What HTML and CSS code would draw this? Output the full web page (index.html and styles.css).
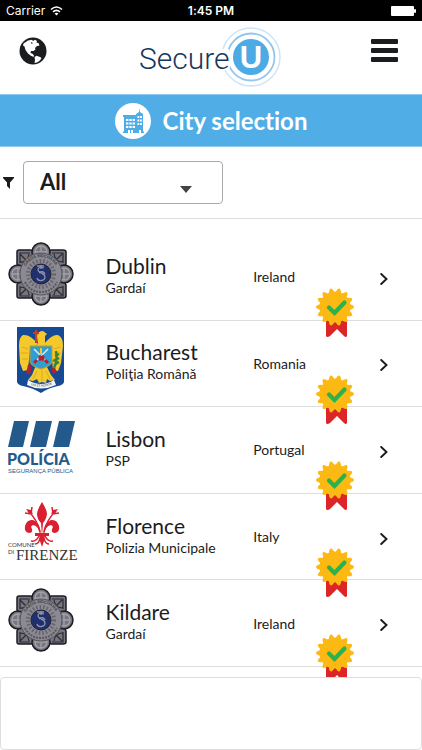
FILE: index.html
```
<!DOCTYPE html>
<html lang="en">
<head>
    <meta charset="UTF-8">
    <meta name="viewport" content="width=device-width, initial-scale=1.0">
    <title>SecureU - City selection</title>
    <link rel="stylesheet" href="styles.css">
</head>

<body>
    <!-- shared drawings -->
    <svg class="defs" width="0" height="0" aria-hidden="true">
        <symbol id="medal" viewBox="0 0 38 50">
            <path d="M10 30h21v18q-1 2-3 0l-7-7-7 7q-3 2-4 0z" fill="#dc2527"/>
            <g fill="#fdb913">
                <circle cx="19" cy="19" r="15.500"/>
                <ellipse cx="19" cy="19" rx="4.500" ry="19" transform="rotate(13 19 19)"/>
                <ellipse cx="19" cy="19" rx="4.500" ry="19" transform="rotate(39 19 19)"/>
                <ellipse cx="19" cy="19" rx="4.500" ry="19" transform="rotate(64 19 19)"/>
                <ellipse cx="19" cy="19" rx="4.500" ry="19" transform="rotate(90 19 19)"/>
                <ellipse cx="19" cy="19" rx="4.500" ry="19" transform="rotate(116 19 19)"/>
                <ellipse cx="19" cy="19" rx="4.500" ry="19" transform="rotate(141 19 19)"/>
                <ellipse cx="19" cy="19" rx="4.500" ry="19" transform="rotate(167 19 19)"/>
            </g>
            <path d="M13 19.500l5.500 5.500 10-10.500" fill="none" stroke="#2bb24c" stroke-width="4.200" stroke-linecap="round"/>
        </symbol>
        <symbol id="arrow" viewBox="0 0 8 12">
            <path d="M1.200 1l5.300 5-5.300 5" fill="none" stroke="#1b1c1d" stroke-width="1.900" stroke-linecap="round"/>
        </symbol>
    </svg>

    <!-- status bar -->
    <div class="status">
        <div class="carrier">
            <span>Carrier</span>
            <svg width="13" height="10" viewBox="0 0 13 10" fill="none" stroke="#fff" stroke-width="1.600">
                <path d="M1 3.500q5.500-5 11 0M3 5.800q3.500-3 7 0"/>
                <path d="M4.600 7.500q1.900-1.500 3.800 0l-1.900 2z" fill="#fff" stroke="none"/>
            </svg>
        </div>
        <div class="time">1:45 PM</div>
        <svg class="battery" width="25" height="10" viewBox="0 0 25 10" fill="#fff">
            <rect width="23" height="10" rx="1"/>
            <rect x="23" y="3" width="2" height="4" rx="1"/>
        </svg>
    </div>

    <!-- header -->
    <header class="header">
        <button class="icon-btn" aria-label="Language">
            <svg width="28" height="28" viewBox="0 0 28 28">
                <circle cx="14" cy="14" r="13.500" fill="#1b1c1d"/>
                <path d="M4.500 6.500L9 3.500l4-.8 1 1.300 2-1.200 2 1.200-.5 1.800 2 .2 1 2.500-2.500.5-2 2 .5 1.500-2 1.500-2.500 0-.5 2 2 .8 1.500 1.700-.5 1.500-3-1.500-2.500-2-2.500-3.500-1-3.500L4 8.500z" fill="#fff"/>
                <path d="M15.500 20l2-1.200 3.500 1.200 1.500 1-1.500 2.500-3 2-2.500.5.500-3z" fill="#fff"/>
                <path d="M12 5l2 1-1.500 1z" fill="#1b1c1d"/>
            </svg>
        </button>
        <a class="logo" href="#" aria-label="SecureU">
            <svg width="144" height="62" viewBox="-2 0 144 62">
                <circle cx="112" cy="30" r="29" fill="none" stroke="#cfe4f7" stroke-width="1.500"/>
                <circle cx="112" cy="30" r="23.500" fill="none" stroke="#94c6ee" stroke-width="1.800"/>
                <path d="M79 22h11l3 12-3 9H79z" fill="#fff"/>
                <circle cx="112" cy="30" r="18" fill="#4cabe4"/>
                <text class="logo-text" x="0" y="42">Secure</text>
                <text class="logo-u" x="112" y="41" text-anchor="middle">U</text>
            </svg>
        </a>
        <button class="icon-btn" aria-label="Menu">
            <svg width="28" height="24" viewBox="0 0 28 24" fill="#1b1c1d">
                <rect width="27" height="5" rx="1"/>
                <rect y="9" width="27" height="5" rx="1"/>
                <rect y="18" width="27" height="5" rx="1"/>
            </svg>
        </button>
    </header>

    <!-- title -->
    <div class="banner">
        <svg width="36" height="36" viewBox="0 0 36 36">
            <circle cx="18" cy="18" r="18" fill="#fff"/>
            <path d="M8 12h13v-1l3-2 .5-4 .5 4 3 2v17.500h1v1.500H8v-1.500h1V14H8z" fill="#4fade5"/>
            <g stroke="#fff" stroke-width="2.200">
                <path d="M11 17h9M11 20.500h9M11 24h9" stroke-dasharray="2.400 .9"/>
                <path d="M22.500 14h4.500M22.500 17.500h4.500M22.500 21h4.500" stroke-dasharray="1.800 .8"/>
            </g>
            <path d="M13 27h2v3h-2zM16 27h2v3h-2zM24 27h2v3h-2z" fill="#fff"/>
        </svg>
        <h1>City selection</h1>
    </div>

    <!-- filter -->
    <div class="filter">
        <label for="country">
            <svg width="11" height="12" viewBox="0 0 11 12" role="img" aria-label="Filter"><path d="M0 0h11v1L7 5.500V12L4 9V5.500L0 1z" fill="#1b1c1d"/></svg>
        </label>
        <div class="select">
            <select id="country">
                <option>All</option>
                <option>Ireland</option>
                <option>Romania</option>
                <option>Portugal</option>
                <option>Italy</option>
            </select>
            <svg class="caret" width="12" height="7" viewBox="0 0 12 7"><path d="M0 0h12L6 7z" fill="#444"/></svg>
        </div>
    </div>

    <!-- cities -->
    <ul class="cities">
        <li class="city">
            <svg class="crest" width="66" height="64" viewBox="0 0 66 64">
                <g id="garda">
                    <g fill="#77757f" stroke="#1c1c22" stroke-width="1.500">
                        <path d="M9 10q0-2 2-2h12l10 7 10-7h12q3 0 3 2v12l-6 10 6 11v11q0 2-3 2H43l-10-6-10 6H11q-2 0-2-2V43l6-11-6-10z"/>
                        <circle cx="33" cy="10" r="9"/>
                        <circle cx="33" cy="54" r="9"/>
                        <circle cx="10" cy="32" r="9"/>
                        <circle cx="56" cy="32" r="9"/>
                    </g>
                    <g fill="none" stroke="#2b2b31" stroke-width="1.200">
                        <path d="M12 21V11h10M12 20q8 1 9-8M12 12l8 8M44 11h11v10M46 12q1 8 9 8M54 12l-8 8M12 44v10h10M12 45q8 0 9 8M12 53l8-8M44 54h11V44M46 53q1-8 9-8M54 53l-8-8"/>
                    </g>
                    <g fill="none" stroke="#a5a2a9" stroke-width="1.300">
                        <circle cx="33" cy="10" r="6"/><path d="M33 4v12M27 10h12"/>
                        <circle cx="33" cy="54" r="6"/><path d="M33 48v12M27 54h12"/>
                        <circle cx="10" cy="32" r="6"/><path d="M10 26v12M4 32h12"/>
                        <circle cx="56" cy="32" r="6"/><path d="M56 26v12M50 32h12"/>
                    </g>
                    <circle cx="33" cy="32" r="21" fill="#8b8992" stroke="#55545c"/>
                    <path id="ring" d="M16 32a17 17 0 0 1 34 0" fill="none"/>
                    <text class="garda-text"><textPath href="#ring" startOffset="8">GARDA SÍOCHÁNA</textPath></text>
                    <path d="M17 40q5 10 16 10t16-10" fill="none" stroke="#5b5962" stroke-width="2.200" stroke-dasharray="2 1"/>
                    <circle cx="33" cy="32" r="13" fill="none" stroke="#66646d" stroke-width="4" stroke-dasharray="1.500 2"/>
                    <circle cx="33" cy="32" r="10" fill="#20306f" stroke="#22232d"/>
                    <path d="M36 26q-6-2-6 2c0 3 7 3 7 7s-7 5-8 1M29 24h7M33 23v4M31 31q4-3 6 1" fill="none" stroke="#8f93a6" stroke-width="1.300"/>
                </g>
            </svg>
            <div class="name">
                <h2>Dublin</h2>
                <p>Gardaí</p>
            </div>
            <span class="country">Ireland</span>
            <svg class="arrow" width="8" height="12"><use href="#arrow"/></svg>
            <svg class="medal" width="38" height="50"><use href="#medal"/></svg>
        </li>
        <li class="city">
            <svg class="crest" width="66" height="66" viewBox="0 0 66 66">
                <path d="M9 0h47v55q-1 3-6 4-10 2-17 7-8-5-18-7-5-1-6-4z" fill="#174a95"/>
                <g fill="#f4c92c">
                    <path d="M30 17q-8-10-15-9-4 2-4 11l1 17 3 8 5-1 2-21zM36 17q8-10 14-9 5 2 5 11l-2 17-3 8-5-1-2-21z"/>
                    <path d="M30 17l-1-8q1-5 6-5l4 3-2 2v9l5 3H24z"/>
                    <path d="M28 38h10l5 10 4 5-5 1-3-2-1 4-4-1-3 1-2-4-4 2-5-1 4-5z"/>
                </g>
                <path d="M14 20l6 2M13 26h7M14 32h6M52 20l-6 2M53 26h-7M52 32h-6M29 44l-4 8M34 43v11M38 44l4 8" stroke="#dba91c"/>
                <path d="M22 19h22v16q-1 4-11 7-10-3-11-7z" fill="#2e9fd3" stroke="#c59c2f"/>
                <path d="M26 22l14 14M40 22L26 36" stroke="#e3e6e8" stroke-width="1.500"/>
                <path d="M26 36l3-3M40 36l-3-3M31 29l5 4M31 33l5-4" stroke="#b32130" stroke-width="3"/>
                <path d="M33 21v6" stroke="#f4c92c" stroke-width="2"/>
                <path d="M28 3v13M25 6h6" stroke="#c44028" stroke-width="2"/>
                <path d="M22 38l-2 9M45 41l2 5" stroke="#b32130" stroke-width="4"/>
                <path d="M46 41q4-8 2-17M45 34l6-3M46 38l5-3M47 29l4-2" stroke="#39843d" stroke-width="2.500" fill="none"/>
                <path d="M20 53q13 8 26 0l2 5q-15 7-29 0z" fill="#f3f3f3"/>
                <path id="motto" d="M23 58q10 4 22-1" fill="none"/>
                <text class="motto-text"><textPath href="#motto">LEX ET HONOR</textPath></text>
            </svg>
            <div class="name">
                <h2>Bucharest</h2>
                <p>Poliţia Română</p>
            </div>
            <span class="country">Romania</span>
            <svg class="arrow" width="8" height="12"><use href="#arrow"/></svg>
            <svg class="medal" width="38" height="50"><use href="#medal"/></svg>
        </li>
        <li class="city">
            <svg class="crest" width="68" height="54" viewBox="0 0 68 54" fill="#24598b">
                <path d="M6 1h15l-6 26H0zM28 1h16l-6 26H22zM51 1h16l-6 26H45z"/>
                <text class="policia" x="-1" y="45">POLÍCIA</text>
                <text class="publica" x="0" y="53">SEGURANÇA PÚBLICA</text>
            </svg>
            <div class="name">
                <h2>Lisbon</h2>
                <p>PSP</p>
            </div>
            <span class="country">Portugal</span>
            <svg class="arrow" width="8" height="12"><use href="#arrow"/></svg>
            <svg class="medal" width="38" height="50"><use href="#medal"/></svg>
        </li>
        <li class="city">
            <svg class="crest" width="72" height="64" viewBox="0 0 72 64">
                <g fill="#dc1f30">
                    <path d="M34 0q5 8 5 12-1 6-4 9l-1 13-1-13q-4-4-4-9 0-4 5-12z"/>
                    <path d="M32 33q-1-9-7-10-3 1-1 4 1 4-3 4-5-1-4-7 2-7 8-6 7 2 8 15zM36 33q1-9 7-10 3 1 1 4-1 4 3 4 5-1 4-7-2-7-8-6-7 2-8 15z"/>
                    <path d="M27 31h14v3H27z"/>
                    <path d="M31 33h6l-1 6-2 6-2-6z"/>
                    <path d="M18 7l5 1 2 4-4-1zM50 7l-5 1-2 4 4-1z"/>
                </g>
                <g fill="none" stroke="#dc1f30" stroke-width="1.500">
                    <path d="M32 30Q29 17 20 9M36 30q3-13 12-21M31 34q-3 6-8 5M37 34q3 6 8 5M32 36q-1 6-5 6M36 36q1 6 5 6M24 5l-1 7-6-1M44 5l1 7 6-1"/>
                </g>
                <text class="comune" x="0" y="45">COMUNE</text>
                <text class="comune" x="0" y="52">DI</text>
                <text class="firenze" x="8" y="58">FIRENZE</text>
            </svg>
            <div class="name">
                <h2>Florence</h2>
                <p>Polizia Municipale</p>
            </div>
            <span class="country">Italy</span>
            <svg class="arrow" width="8" height="12"><use href="#arrow"/></svg>
            <svg class="medal" width="38" height="50"><use href="#medal"/></svg>
        </li>
        <li class="city">
            <svg class="crest" width="66" height="64" viewBox="0 0 66 64"><use href="#garda"/></svg>
            <div class="name">
                <h2>Kildare</h2>
                <p>Gardaí</p>
            </div>
            <span class="country">Ireland</span>
            <svg class="arrow" width="8" height="12"><use href="#arrow"/></svg>
            <svg class="medal" width="38" height="50"><use href="#medal"/></svg>
        </li>
    </ul>

    <!-- bottom panel -->
    <div class="panel"></div>
</body>
</html>
```
FILE: styles.css
```
* {
    box-sizing: border-box;
}

body {
    display: flex;
    flex-direction: column;
    min-height: 100vh;
    margin: 0;
    background-color: #fff;
    color: #1b1c1d;
    font-family: Lato, "Liberation Sans", sans-serif;
    font-variant-ligatures: none;
}

svg {
    display: block;
}

.defs {
    position: absolute;
}

.status {
    display: grid;
    grid-template-columns: 1fr auto 1fr;
    align-items: center;
    height: 21px;
    padding: 0 6px;
    background-color: #000;
    color: #fff;
    font-family: Inter, sans-serif;
    font-size: 12px;
}

.carrier {
    display: flex;
    align-items: center;
    gap: 5px;
}

.time {
    font-weight: 600;
}

.battery {
    justify-self: end;
}

.header {
    display: flex;
    align-items: center;
    justify-content: space-between;
    height: 73px;
    padding: 0 23px 0 19px;
}

.icon-btn {
    padding: 0 0 14px;
    border: 0;
    background: none;
}

.logo-text {
    font-family: Roboto, "Liberation Sans", sans-serif;
    font-size: 30px;
    font-weight: 300;
    fill: #17375a;
}

.logo-u {
    font-family: "Liberation Sans", sans-serif;
    font-size: 31px;
    font-weight: bold;
    fill: #fff;
}

.banner {
    display: flex;
    align-items: center;
    justify-content: center;
    gap: 12px;
    height: 53px;
    background-color: #50ade5;
    border-top: 1px solid #8fcaee;
    border-bottom: 1px solid #8fcaee;
    color: #fff;
}

.banner h1 {
    margin: 0;
    font-size: 24px;
    line-height: 28px;
}

.filter {
    display: flex;
    align-items: center;
    gap: 9px;
    height: 72px;
    padding-left: 3px;
    border-bottom: 1px solid #ddd;
}

.select {
    position: relative;
    width: 200px;
}

.select select {
    width: 100%;
    height: 43px;
    padding: 0 16px 2px;
    border: 1px solid #aaa;
    border-radius: 4px;
    background-color: #fff;
    color: #1b1c1d;
    font-family: inherit;
    font-size: 22px;
    font-weight: bold;
    appearance: none;
}

.caret {
    position: absolute;
    right: 31px;
    bottom: 11px;
    pointer-events: none;
}

.cities {
    display: flex;
    flex: 1;
    flex-direction: column;
    margin: 0;
    padding: 15px 0 0;
    list-style: none;
}

.city {
    position: relative;
    display: grid;
    flex: 1;
    grid-template-columns: 25% 35% 30% 10%;
    align-items: center;
    min-height: 86px;
    border-bottom: 1px solid #ddd;
}

.crest {
    margin: 0 0 6px 8px;
}

.name {
    padding-bottom: 4px;
}

.name h2 {
    margin: 0;
    font-size: 21px;
    font-weight: 400;
    line-height: 26px;
}

.name p {
    margin: 0;
    font-size: 14px;
    line-height: 18px;
}

.country {
    font-size: 14px;
}

.arrow {
    margin-top: 4px;
}

.medal {
    position: absolute;
    top: 54px;
    right: 16%;
    z-index: 1;
}

.garda-text {
    font-size: 4px;
    font-weight: bold;
    fill: #35343c;
}

.motto-text {
    font-size: 3px;
    fill: #333;
}

.policia {
    font-size: 16px;
    font-weight: 900;
}

.publica {
    font-family: "Liberation Sans", sans-serif;
    font-size: 6px;
}

.comune {
    font-size: 6px;
    fill: #333;
}

.firenze {
    font-family: "Liberation Serif", serif;
    font-size: 15px;
    fill: #333;
}

.panel {
    position: relative;
    z-index: 2;
    height: 73px;
    margin-top: 10px;
    border: 1px solid #ddd;
    border-radius: 4px;
    background-color: #fff;
}
```
